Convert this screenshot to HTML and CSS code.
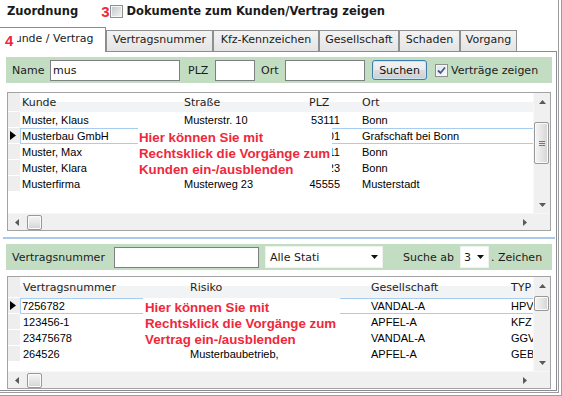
FILE: index.html
```html
<!DOCTYPE html>
<html lang="de">
<head>
    <meta charset="UTF-8">
    <meta name="viewport" content="width=device-width, initial-scale=1.0">
    <title>Zuordnung</title>
    <link rel="stylesheet" href="styles.css">
</head>
<body>
    <div class="window">
        <div class="top-bar">
            <span class="title">Zuordnung</span>
            <span class="mark mark-3">3</span>
            <span class="checkbox"></span>
            <span class="top-label">Dokumente zum Kunden/Vertrag zeigen</span>
        </div>

        <div class="tabs">
            <div class="tab active">Kunde / Vertrag<span class="mark mark-4">4</span></div>
            <div class="tab tab-vnr">Vertragsnummer</div>
            <div class="tab tab-kfz">Kfz-Kennzeichen</div>
            <div class="tab tab-ges">Gesellschaft</div>
            <div class="tab tab-sch">Schaden</div>
            <div class="tab tab-vor">Vorgang</div>
        </div>

        <div class="tab-page">
            <!-- Suche Kunde -->
            <div class="toolbar">
                <span class="lbl l-name">Name</span>
                <input class="field f-name" type="text" value="mus">
                <span class="lbl l-plz">PLZ</span>
                <input class="field f-plz" type="text">
                <span class="lbl l-ort">Ort</span>
                <input class="field f-ort" type="text">
                <button class="search-btn" type="button">Suchen</button>
                <span class="checkbox checked">
                    <svg width="11" height="11" viewBox="0 0 11 11"><path d="M2 5.5 L4.5 8 L9 2.5" fill="none" stroke="#3f5b8e" stroke-width="1.8"/></svg>
                </span>
                <span class="lbl l-vz">Verträge zeigen</span>
            </div>

            <div class="grid grid-top">
                <div class="grid-main">
                    <div class="rows">
                        <div class="row head">
                            <span class="ind"></span>
                            <span class="cell k-kunde">Kunde</span>
                            <span class="cell k-str">Straße</span>
                            <span class="cell k-plz">PLZ</span>
                            <span class="cell k-ort">Ort</span>
                        </div>
                        <div class="row">
                            <span class="ind"></span>
                            <span class="cell k-kunde">Muster, Klaus</span>
                            <span class="cell k-str">Musterstr. 10</span>
                            <span class="cell k-plz num">53111</span>
                            <span class="cell k-ort">Bonn</span>
                        </div>
                        <div class="row sel">
                            <span class="ind"><svg width="7" height="9" viewBox="0 0 7 9"><polygon points="0,0 6,4.5 0,9" fill="#000"/></svg></span>
                            <span class="cell k-kunde">Musterbau GmbH</span>
                            <span class="cell k-str"></span>
                            <span class="cell k-plz num">53501</span>
                            <span class="cell k-ort">Grafschaft bei Bonn</span>
                        </div>
                        <div class="row">
                            <span class="ind"></span>
                            <span class="cell k-kunde">Muster, Max</span>
                            <span class="cell k-str"></span>
                            <span class="cell k-plz num">53111</span>
                            <span class="cell k-ort">Bonn</span>
                        </div>
                        <div class="row">
                            <span class="ind"></span>
                            <span class="cell k-kunde">Muster, Klara</span>
                            <span class="cell k-str"></span>
                            <span class="cell k-plz num">53123</span>
                            <span class="cell k-ort">Bonn</span>
                        </div>
                        <div class="row">
                            <span class="ind"></span>
                            <span class="cell k-kunde">Musterfirma</span>
                            <span class="cell k-str">Musterweg 23</span>
                            <span class="cell k-plz num">45555</span>
                            <span class="cell k-ort">Musterstadt</span>
                        </div>
                    </div>
                    <div class="vscroll">
                        <span class="arrow"><svg width="7" height="4" viewBox="0 0 7 4"><polygon points="0,4 3.5,0 7,4" fill="#5a5a5a"/></svg></span>
                        <span class="thumb thumb-top"><span class="grip"></span></span>
                        <span class="spacer"></span>
                        <span class="arrow"><svg width="7" height="4" viewBox="0 0 7 4"><polygon points="0,0 7,0 3.5,4" fill="#5a5a5a"/></svg></span>
                    </div>
                </div>
                <div class="hscroll">
                    <span class="arrow"><svg width="4" height="7" viewBox="0 0 4 7"><polygon points="4,0 0,3.5 4,7" fill="#5a5a5a"/></svg></span>
                    <span class="hthumb"></span>
                    <span class="spacer"></span>
                    <span class="arrow"><svg width="4" height="7" viewBox="0 0 4 7"><polygon points="0,0 4,3.5 0,7" fill="#5a5a5a"/></svg></span>
                    <span class="corner"></span>
                </div>
                <div class="note note-top">Hier können Sie mit<br>Rechtsklick die Vorgänge zum<br>Kunden ein-/ausblenden</div>
            </div>

            <div class="splitter"></div>

            <!-- Suche Vertrag -->
            <div class="toolbar">
                <span class="lbl l-vnr">Vertragsnummer</span>
                <input class="field f-vnr" type="text">
                <div class="combo c-stati">Alle Stati
                    <svg width="7" height="4" viewBox="0 0 7 4"><polygon points="0,0 7,0 3.5,4" fill="#111"/></svg>
                </div>
                <span class="lbl l-ab">Suche ab</span>
                <div class="combo c-num">3
                    <svg width="7" height="4" viewBox="0 0 7 4"><polygon points="0,0 7,0 3.5,4" fill="#111"/></svg>
                </div>
                <span class="lbl l-zeichen">. Zeichen</span>
            </div>

            <div class="grid grid-bottom">
                <div class="grid-main">
                    <div class="rows">
                        <div class="row head">
                            <span class="ind"></span>
                            <span class="cell v-nr">Vertragsnummer</span>
                            <span class="cell v-risk">Risiko</span>
                            <span class="cell v-ges">Gesellschaft</span>
                            <span class="cell v-typ">TYP</span>
                        </div>
                        <div class="row sel">
                            <span class="ind"><svg width="7" height="9" viewBox="0 0 7 9"><polygon points="0,0 6,4.5 0,9" fill="#000"/></svg></span>
                            <span class="cell v-nr">7256782</span>
                            <span class="cell v-risk"></span>
                            <span class="cell v-ges">VANDAL-A</span>
                            <span class="cell v-typ">HPV</span>
                        </div>
                        <div class="row">
                            <span class="ind"></span>
                            <span class="cell v-nr">123456-1</span>
                            <span class="cell v-risk"></span>
                            <span class="cell v-ges">APFEL-A</span>
                            <span class="cell v-typ">KFZ</span>
                        </div>
                        <div class="row">
                            <span class="ind"></span>
                            <span class="cell v-nr">23475678</span>
                            <span class="cell v-risk"></span>
                            <span class="cell v-ges">VANDAL-A</span>
                            <span class="cell v-typ">GGV</span>
                        </div>
                        <div class="row">
                            <span class="ind"></span>
                            <span class="cell v-nr">264526</span>
                            <span class="cell v-risk">Musterbaubetrieb,</span>
                            <span class="cell v-ges">APFEL-A</span>
                            <span class="cell v-typ">GEB</span>
                        </div>
                    </div>
                    <div class="vscroll">
                        <span class="arrow"><svg width="7" height="4" viewBox="0 0 7 4"><polygon points="0,4 3.5,0 7,4" fill="#5a5a5a"/></svg></span>
                        <span class="thumb thumb-bottom"></span>
                        <span class="spacer"></span>
                        <span class="arrow"><svg width="7" height="4" viewBox="0 0 7 4"><polygon points="0,0 7,0 3.5,4" fill="#5a5a5a"/></svg></span>
                    </div>
                </div>
                <div class="hscroll">
                    <span class="arrow"><svg width="4" height="7" viewBox="0 0 4 7"><polygon points="4,0 0,3.5 4,7" fill="#5a5a5a"/></svg></span>
                    <span class="hthumb"></span>
                    <span class="spacer"></span>
                    <span class="arrow"><svg width="4" height="7" viewBox="0 0 4 7"><polygon points="0,0 4,3.5 0,7" fill="#5a5a5a"/></svg></span>
                    <span class="corner"></span>
                </div>
                <div class="note note-bottom">Hier können Sie mit<br>Rechtsklick die Vorgänge zum<br>Vertrag ein-/ausblenden</div>
            </div>
        </div>
    </div>
</body>
</html>
```

FILE: styles.css
```css
* {
    margin: 0;
    padding: 0;
    box-sizing: border-box;
}

body {
    font-family: "DejaVu Sans", sans-serif;
    font-size: 11px;
    color: #1b1b1b;
    background: white;
    width: 562px;
    height: 396px;
    overflow: hidden;
}

.window {
    width: 562px;
    height: 396px;
    border-right: 4px double #9c9c9c;
    border-bottom: 4px double #9c9c9c;
    overflow: hidden;
}

/* Kopfzeile */

.top-bar {
    display: flex;
    align-items: center;
    height: 27px;
    padding: 0 0 5px 7px;
}

.title,
.top-label {
    font-weight: bold;
    font-size: 11.5px;
    color: #1a1a1a;
}

.top-label {
    margin-left: 3px;
}

.mark {
    color: #f0283c;
    font-family: "Liberation Sans", Arial, sans-serif;
    font-weight: bold;
    font-size: 15px;
    line-height: 15px;
}

.mark-3 {
    margin-left: 23px;
    margin-right: 1px;
}

.mark-4 {
    position: absolute;
    left: 6px;
    top: 5px;
    width: 13px;
    padding-left: 1px;
    background: white;
}

.checkbox {
    display: flex;
    align-items: center;
    justify-content: center;
    width: 13px;
    height: 13px;
    border: 1px solid #8e8f8f;
    background: linear-gradient(135deg, #c2c6cb, #f3f3f3);
    box-shadow: inset 0 0 0 1px #f6f6f6;
}

.checkbox.checked {
    background: linear-gradient(135deg, #dfe3e8, #fbfbfb);
}

/* Reiter */

.tabs {
    position: relative;
    z-index: 1;
    display: flex;
    align-items: flex-end;
    height: 24px;
}

.tab {
    height: 21px;
    padding-top: 2px;
    border: 1px solid #8e8f8f;
    border-bottom: none;
    background: linear-gradient(#f3f3f3, #e4e4e4);
    text-align: center;
    white-space: nowrap;
    overflow: hidden;
}

.tab.active {
    position: relative;
    height: 25px;
    width: 109px;
    margin-left: -3px;
    margin-bottom: -1px;
    padding: 4px 0 0 10px;
    text-align: left;
    background: white;
    border-color: #898c95;
}

.tab-vnr { width: 107px; }
.tab-kfz { width: 106px; }
.tab-ges { width: 80px; }
.tab-sch { width: 61px; }
.tab-vor { width: 57px; }

.tab-page {
    margin-left: -1px;
    width: 558px;
    height: 340px;
    border: 1px solid #898c95;
    padding: 5px 4px 0 6px;
}

/* Suchleisten */

.toolbar {
    display: flex;
    align-items: center;
    height: 26px;
    padding-left: 6px;
    background: #c3ddc3;
}

.lbl {
    white-space: nowrap;
}

.l-name { width: 38px; }
.l-plz { width: 35px; padding-left: 8px; }
.l-ort { width: 30px; padding-left: 6px; }
.l-vz { margin-left: 3px; }
.l-vnr { width: 102px; }
.l-ab { width: 57px; margin-left: 20px; }
.l-zeichen { margin-left: 2px; }

.field {
    height: 21px;
    border: 1px solid #7d7f83;
    background: white;
    font-family: "DejaVu Sans", sans-serif;
    font-size: 11px;
    color: #111;
    padding-left: 2px;
    outline: none;
}

.f-name { width: 130px; }
.f-plz { width: 40px; }
.f-ort { width: 80px; }
.f-vnr { width: 145px; }

.search-btn {
    width: 55px;
    height: 20px;
    margin-left: 7px;
    margin-right: 8px;
    border: 1px solid #3c7fb1;
    border-radius: 3px;
    background: linear-gradient(#f2f2f2 0%, #ebebeb 50%, #dddddd 50%, #cfcfcf 100%);
    box-shadow: inset 0 0 0 1px #c6e6f8;
    font-family: "DejaVu Sans", sans-serif;
    font-size: 11px;
    color: #111;
}

.combo {
    display: flex;
    align-items: center;
    justify-content: space-between;
    height: 22px;
    padding: 0 4px 0 4px;
    background: white;
    border: 1px solid #eef3ee;
}

.c-stati {
    width: 118px;
    margin-left: 6px;
}

.c-num {
    width: 29px;
    padding-left: 3px;
}

.splitter {
    height: 13px;
    margin: 0 -3px;
    padding-top: 6px;
}

.splitter::before {
    content: "";
    display: block;
    height: 2px;
    background: #a9c8ea;
}

/* Tabellen */

.grid {
    position: relative;
    margin: 9px 1px 0 1px;
    height: 139px;
    border: 1px solid #a3a3a3;
    display: flex;
    flex-direction: column;
    background: white;
}

.grid-bottom {
    margin-top: 6px;
    height: 113px;
}

.grid-main {
    display: flex;
    flex: 1;
    min-height: 0;
}

.rows {
    flex: 1;
    overflow: hidden;
}

.row {
    display: flex;
    height: 16px;
    font-family: "Liberation Sans", Arial, sans-serif;
    font-size: 11px;
    color: #000;
    white-space: nowrap;
}

.row.head {
    height: 19px;
    font-family: "DejaVu Sans", sans-serif;
    color: #1e1e1e;
    background: linear-gradient(#ffffff 0%, #ffffff 45%, #f2f3f4 45%, #f2f3f4 100%);
}

.grid-bottom .row.head {
    height: 21px;
}

.ind {
    flex: none;
    width: 12px;
    display: flex;
    align-items: center;
    padding-left: 2px;
    background: #eeeeee;
    border-bottom: 1px solid white;
}

.cell {
    flex: none;
    display: flex;
    align-items: center;
    padding-left: 2px;
    overflow: hidden;
}

.row.sel .cell {
    border-top: 1px solid #a7cdf0;
    border-bottom: 1px solid #a7cdf0;
}

.row.sel .cell:nth-child(2) {
    border-left: 1px solid #a7cdf0;
    border-right: 1px solid #a7cdf0;
    padding-left: 1px;
}

.k-kunde { width: 162px; }
.k-str { width: 125px; }
.k-plz { width: 36px; }
.k-plz.num { justify-content: flex-end; padding-right: 3px; }
.k-ort { flex: 1; padding-left: 19px; }

.v-nr { width: 167px; padding-left: 3px; }
.v-risk { width: 181px; padding-left: 3px; }
.v-ges { width: 140px; padding-left: 3px; }
.v-typ { flex: 1; padding-left: 3px; }

/* Bildlaufleisten */

.vscroll {
    width: 17px;
    display: flex;
    flex-direction: column;
    background: #f0f0f0;
    border-left: 1px solid #f7f7f7;
}

.hscroll {
    height: 17px;
    display: flex;
    background: #f0f0f0;
    border-top: 1px solid #f7f7f7;
}

.arrow {
    flex: none;
    width: 17px;
    height: 17px;
    display: flex;
    align-items: center;
    justify-content: center;
}

.spacer {
    flex: 1;
}

.thumb {
    width: 15px;
    display: flex;
    align-items: center;
    justify-content: center;
    border: 1px solid #989898;
    border-radius: 2px;
    background: linear-gradient(90deg, #f5f5f5, #e6e6e6 50%, #d4d4d4);
    box-shadow: inset 0 0 0 1px #fbfbfb;
}

.thumb-top {
    height: 42px;
    margin-top: 12px;
}

.thumb-bottom {
    height: 15px;
    margin-top: 2px;
}

.grip {
    width: 6px;
    height: 5px;
    border-top: 1px solid #777;
    border-bottom: 1px solid #777;
    position: relative;
}

.grip::after {
    content: "";
    position: absolute;
    left: 0;
    right: 0;
    top: 1px;
    border-top: 1px solid #777;
}

.hthumb {
    width: 15px;
    height: 15px;
    margin: 1px 0 0 2px;
    border: 1px solid #989898;
    border-radius: 2px;
    background: linear-gradient(#f5f5f5, #e6e6e6 50%, #d4d4d4);
    box-shadow: inset 0 0 0 1px #fbfbfb;
}

.corner {
    width: 17px;
    background: #f0f0f0;
}

/* Hinweise */

.note {
    position: absolute;
    background: white;
    color: #f0283c;
    font-family: "Liberation Sans", Arial, sans-serif;
    font-weight: bold;
    font-size: 13.3px;
    line-height: 16px;
    white-space: nowrap;
    padding-top: 2px;
    height: 50px;
    overflow: hidden;
}

.note-top {
    left: 130px;
    top: 35px;
    width: 194px;
    padding-left: 1px;
}

.note-bottom {
    left: 135px;
    top: 21px;
    width: 197px;
    padding-left: 2px;
}
```
